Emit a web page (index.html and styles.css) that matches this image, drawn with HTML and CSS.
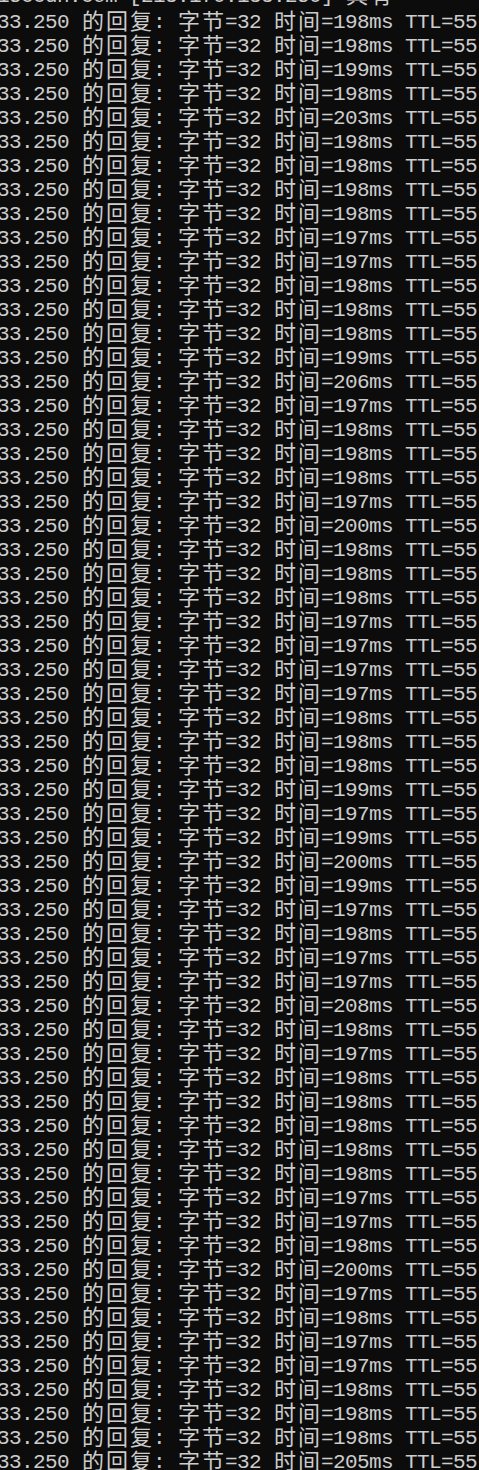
FILE: index.html
```html
<!DOCTYPE html>
<html lang="zh-CN">
<head>
<meta charset="utf-8">
<title>ping</title>
<link rel="stylesheet" href="styles.css">
</head>
<body>
<div class="console">
<div class="ln head">15ccdn.com [213.170.133.250] <span class="z">具有</span></div>
<div class="ln">33.250 <span class="z">的回复</span>: <span class="z">字节</span>=32 <span class="z">时间</span>=198ms TTL=55</div>
<div class="ln">33.250 <span class="z">的回复</span>: <span class="z">字节</span>=32 <span class="z">时间</span>=198ms TTL=55</div>
<div class="ln">33.250 <span class="z">的回复</span>: <span class="z">字节</span>=32 <span class="z">时间</span>=199ms TTL=55</div>
<div class="ln">33.250 <span class="z">的回复</span>: <span class="z">字节</span>=32 <span class="z">时间</span>=198ms TTL=55</div>
<div class="ln">33.250 <span class="z">的回复</span>: <span class="z">字节</span>=32 <span class="z">时间</span>=203ms TTL=55</div>
<div class="ln">33.250 <span class="z">的回复</span>: <span class="z">字节</span>=32 <span class="z">时间</span>=198ms TTL=55</div>
<div class="ln">33.250 <span class="z">的回复</span>: <span class="z">字节</span>=32 <span class="z">时间</span>=198ms TTL=55</div>
<div class="ln">33.250 <span class="z">的回复</span>: <span class="z">字节</span>=32 <span class="z">时间</span>=198ms TTL=55</div>
<div class="ln">33.250 <span class="z">的回复</span>: <span class="z">字节</span>=32 <span class="z">时间</span>=198ms TTL=55</div>
<div class="ln">33.250 <span class="z">的回复</span>: <span class="z">字节</span>=32 <span class="z">时间</span>=197ms TTL=55</div>
<div class="ln">33.250 <span class="z">的回复</span>: <span class="z">字节</span>=32 <span class="z">时间</span>=197ms TTL=55</div>
<div class="ln">33.250 <span class="z">的回复</span>: <span class="z">字节</span>=32 <span class="z">时间</span>=198ms TTL=55</div>
<div class="ln">33.250 <span class="z">的回复</span>: <span class="z">字节</span>=32 <span class="z">时间</span>=198ms TTL=55</div>
<div class="ln">33.250 <span class="z">的回复</span>: <span class="z">字节</span>=32 <span class="z">时间</span>=198ms TTL=55</div>
<div class="ln">33.250 <span class="z">的回复</span>: <span class="z">字节</span>=32 <span class="z">时间</span>=199ms TTL=55</div>
<div class="ln">33.250 <span class="z">的回复</span>: <span class="z">字节</span>=32 <span class="z">时间</span>=206ms TTL=55</div>
<div class="ln">33.250 <span class="z">的回复</span>: <span class="z">字节</span>=32 <span class="z">时间</span>=197ms TTL=55</div>
<div class="ln">33.250 <span class="z">的回复</span>: <span class="z">字节</span>=32 <span class="z">时间</span>=198ms TTL=55</div>
<div class="ln">33.250 <span class="z">的回复</span>: <span class="z">字节</span>=32 <span class="z">时间</span>=198ms TTL=55</div>
<div class="ln">33.250 <span class="z">的回复</span>: <span class="z">字节</span>=32 <span class="z">时间</span>=198ms TTL=55</div>
<div class="ln">33.250 <span class="z">的回复</span>: <span class="z">字节</span>=32 <span class="z">时间</span>=197ms TTL=55</div>
<div class="ln">33.250 <span class="z">的回复</span>: <span class="z">字节</span>=32 <span class="z">时间</span>=200ms TTL=55</div>
<div class="ln">33.250 <span class="z">的回复</span>: <span class="z">字节</span>=32 <span class="z">时间</span>=198ms TTL=55</div>
<div class="ln">33.250 <span class="z">的回复</span>: <span class="z">字节</span>=32 <span class="z">时间</span>=198ms TTL=55</div>
<div class="ln">33.250 <span class="z">的回复</span>: <span class="z">字节</span>=32 <span class="z">时间</span>=198ms TTL=55</div>
<div class="ln">33.250 <span class="z">的回复</span>: <span class="z">字节</span>=32 <span class="z">时间</span>=197ms TTL=55</div>
<div class="ln">33.250 <span class="z">的回复</span>: <span class="z">字节</span>=32 <span class="z">时间</span>=197ms TTL=55</div>
<div class="ln">33.250 <span class="z">的回复</span>: <span class="z">字节</span>=32 <span class="z">时间</span>=197ms TTL=55</div>
<div class="ln">33.250 <span class="z">的回复</span>: <span class="z">字节</span>=32 <span class="z">时间</span>=197ms TTL=55</div>
<div class="ln">33.250 <span class="z">的回复</span>: <span class="z">字节</span>=32 <span class="z">时间</span>=198ms TTL=55</div>
<div class="ln">33.250 <span class="z">的回复</span>: <span class="z">字节</span>=32 <span class="z">时间</span>=198ms TTL=55</div>
<div class="ln">33.250 <span class="z">的回复</span>: <span class="z">字节</span>=32 <span class="z">时间</span>=198ms TTL=55</div>
<div class="ln">33.250 <span class="z">的回复</span>: <span class="z">字节</span>=32 <span class="z">时间</span>=199ms TTL=55</div>
<div class="ln">33.250 <span class="z">的回复</span>: <span class="z">字节</span>=32 <span class="z">时间</span>=197ms TTL=55</div>
<div class="ln">33.250 <span class="z">的回复</span>: <span class="z">字节</span>=32 <span class="z">时间</span>=199ms TTL=55</div>
<div class="ln">33.250 <span class="z">的回复</span>: <span class="z">字节</span>=32 <span class="z">时间</span>=200ms TTL=55</div>
<div class="ln">33.250 <span class="z">的回复</span>: <span class="z">字节</span>=32 <span class="z">时间</span>=199ms TTL=55</div>
<div class="ln">33.250 <span class="z">的回复</span>: <span class="z">字节</span>=32 <span class="z">时间</span>=197ms TTL=55</div>
<div class="ln">33.250 <span class="z">的回复</span>: <span class="z">字节</span>=32 <span class="z">时间</span>=198ms TTL=55</div>
<div class="ln">33.250 <span class="z">的回复</span>: <span class="z">字节</span>=32 <span class="z">时间</span>=197ms TTL=55</div>
<div class="ln">33.250 <span class="z">的回复</span>: <span class="z">字节</span>=32 <span class="z">时间</span>=197ms TTL=55</div>
<div class="ln">33.250 <span class="z">的回复</span>: <span class="z">字节</span>=32 <span class="z">时间</span>=208ms TTL=55</div>
<div class="ln">33.250 <span class="z">的回复</span>: <span class="z">字节</span>=32 <span class="z">时间</span>=198ms TTL=55</div>
<div class="ln">33.250 <span class="z">的回复</span>: <span class="z">字节</span>=32 <span class="z">时间</span>=197ms TTL=55</div>
<div class="ln">33.250 <span class="z">的回复</span>: <span class="z">字节</span>=32 <span class="z">时间</span>=198ms TTL=55</div>
<div class="ln">33.250 <span class="z">的回复</span>: <span class="z">字节</span>=32 <span class="z">时间</span>=198ms TTL=55</div>
<div class="ln">33.250 <span class="z">的回复</span>: <span class="z">字节</span>=32 <span class="z">时间</span>=198ms TTL=55</div>
<div class="ln">33.250 <span class="z">的回复</span>: <span class="z">字节</span>=32 <span class="z">时间</span>=198ms TTL=55</div>
<div class="ln">33.250 <span class="z">的回复</span>: <span class="z">字节</span>=32 <span class="z">时间</span>=198ms TTL=55</div>
<div class="ln">33.250 <span class="z">的回复</span>: <span class="z">字节</span>=32 <span class="z">时间</span>=197ms TTL=55</div>
<div class="ln">33.250 <span class="z">的回复</span>: <span class="z">字节</span>=32 <span class="z">时间</span>=197ms TTL=55</div>
<div class="ln">33.250 <span class="z">的回复</span>: <span class="z">字节</span>=32 <span class="z">时间</span>=198ms TTL=55</div>
<div class="ln">33.250 <span class="z">的回复</span>: <span class="z">字节</span>=32 <span class="z">时间</span>=200ms TTL=55</div>
<div class="ln">33.250 <span class="z">的回复</span>: <span class="z">字节</span>=32 <span class="z">时间</span>=197ms TTL=55</div>
<div class="ln">33.250 <span class="z">的回复</span>: <span class="z">字节</span>=32 <span class="z">时间</span>=198ms TTL=55</div>
<div class="ln">33.250 <span class="z">的回复</span>: <span class="z">字节</span>=32 <span class="z">时间</span>=197ms TTL=55</div>
<div class="ln">33.250 <span class="z">的回复</span>: <span class="z">字节</span>=32 <span class="z">时间</span>=197ms TTL=55</div>
<div class="ln">33.250 <span class="z">的回复</span>: <span class="z">字节</span>=32 <span class="z">时间</span>=198ms TTL=55</div>
<div class="ln">33.250 <span class="z">的回复</span>: <span class="z">字节</span>=32 <span class="z">时间</span>=198ms TTL=55</div>
<div class="ln">33.250 <span class="z">的回复</span>: <span class="z">字节</span>=32 <span class="z">时间</span>=198ms TTL=55</div>
<div class="ln">33.250 <span class="z">的回复</span>: <span class="z">字节</span>=32 <span class="z">时间</span>=205ms TTL=55</div>
</div>
</body>
</html>
```

FILE: styles.css
```css
html, body {
  margin: 0;
  padding: 0;
  background: #0c0c0c;
  overflow: hidden;
}

.console {
  margin: -20px 0 0 -3px;
  color: #cccccc;
  font-family: "Liberation Mono", "Noto Sans CJK SC", monospace;
  font-size: 21px;
  letter-spacing: -0.6px;
  line-height: 24px;
}

.ln {
  height: 23px;
  padding-top: 1px;
  white-space: pre;
}

.head {
  margin-bottom: 2px;
}

.z {
  display: inline-block;
  height: 24px;
  font-family: "Noto Sans CJK SC", sans-serif;
  font-size: 22px;
  letter-spacing: 2px;
  line-height: 24px;
  vertical-align: -1.5px;
  padding-left: 1px;
  margin-right: -1px;
}
```
